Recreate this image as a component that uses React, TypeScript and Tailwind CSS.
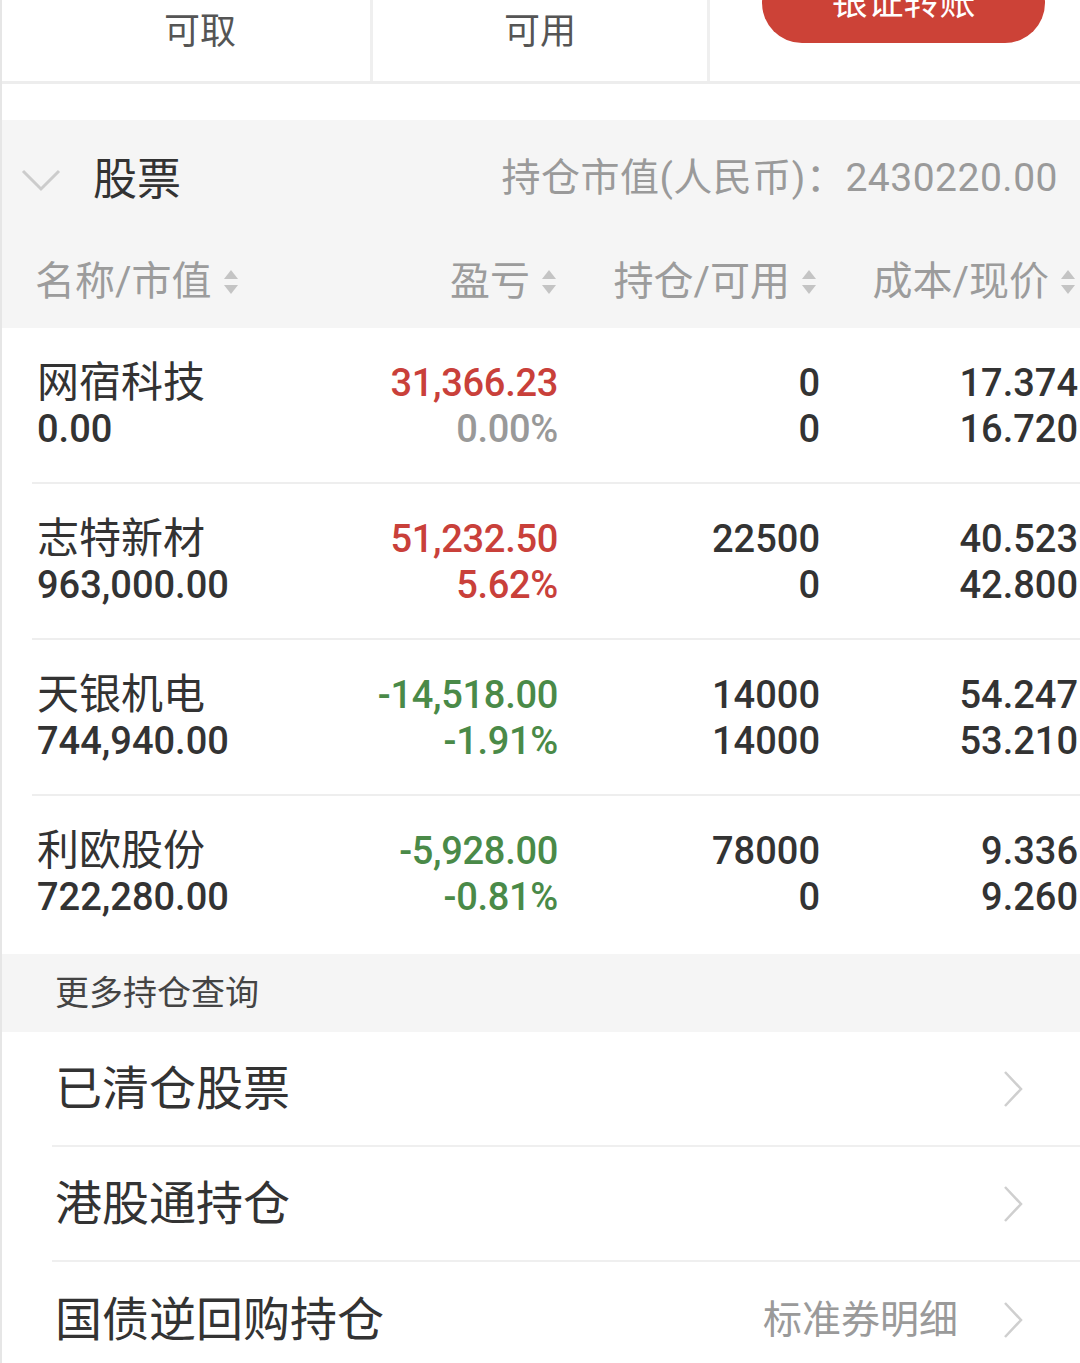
import React from "react";

const rows = [
  { name: "网宿科技", value: "0.00", pnl: "31,366.23", pct: "0.00%", hold: "0", avail: "0", cost: "17.374", price: "16.720", tone: "flat" },
  { name: "志特新材", value: "963,000.00", pnl: "51,232.50", pct: "5.62%", hold: "22500", avail: "0", cost: "40.523", price: "42.800", tone: "up" },
  { name: "天银机电", value: "744,940.00", pnl: "-14,518.00", pct: "-1.91%", hold: "14000", avail: "14000", cost: "54.247", price: "53.210", tone: "down" },
  { name: "利欧股份", value: "722,280.00", pnl: "-5,928.00", pct: "-0.81%", hold: "78000", avail: "0", cost: "9.336", price: "9.260", tone: "down" },
];

function SortIcon() {
  return (
    <svg width="18" height="30" viewBox="0 0 18 30" className="ml-[10px] shrink-0">
      <path d="M9 3 L16 12 L2 12 Z" fill="#c4c4c4" />
      <path d="M9 27 L16 18 L2 18 Z" fill="#c4c4c4" />
    </svg>
  );
}

function Chevron() {
  return (
    <svg width="22" height="38" viewBox="0 0 22 38" className="shrink-0">
      <path d="M3 2 L19 19 L3 36" fill="none" stroke="#cfcfcf" strokeWidth="2.5" />
    </svg>
  );
}

function HeaderCell({ label, className }: { label: string; className: string }) {
  return (
    <div className={className}>
      <span>{label}</span>
      <SortIcon />
    </div>
  );
}

export default function App() {
  return (
    <div className="w-[1080px] h-[1363px] overflow-hidden bg-white border-l-2 border-[#e6e6e6] font-[Roboto,'Noto_Sans_CJK_SC',sans-serif] text-[#333]">
      {/* top tabs */}
      <div className="flex h-[84px] border-b-[3px] border-[#ededed]">
        <div className="w-[371px] flex justify-center pl-[28px] pt-[10px] text-[36px] leading-[44px] text-[#555] border-r-[3px] border-[#efefef]">
          可取
        </div>
        <div className="w-[337px] flex justify-center pt-[10px] text-[36px] leading-[44px] text-[#555] border-r-[3px] border-[#efefef]">
          可用
        </div>
        <div className="flex-1 pl-[52px]">
          <div className="w-[283px] h-[80px] -mt-[37px] rounded-full bg-[#cc4237] flex items-center justify-center text-white text-[36px] leading-[44px]">
            银证转账
          </div>
        </div>
      </div>

      <div className="h-[36px]" />

      {/* stock section header */}
      <div className="bg-[#f5f5f5]">
        <div className="flex items-center h-[120px] pl-[18px] pr-[22px]">
          <svg width="42" height="26" viewBox="0 0 42 26" className="shrink-0">
            <path d="M3 4 L21 22 L39 4" fill="none" stroke="#cccccc" strokeWidth="3" />
          </svg>
          <span className="ml-[31px] text-[44px] leading-[52px] text-[#333]">股票</span>
          <span className="ml-auto text-[39px] leading-[48px] text-[#9a9a9a] -mt-[4px] tracking-[0.5px]">持仓市值(人民币)：2430220.00</span>
        </div>
        <div className="flex items-center h-[88px] text-[40px] leading-[48px] text-[#9c9c9c] pb-[4px]">
          <HeaderCell label="名称/市值" className="w-[240px] pl-[33px] flex items-center" />
          <HeaderCell label="盈亏" className="w-[316px] flex items-center justify-end" />
          <HeaderCell label="持仓/可用" className="w-[260px] flex items-center justify-end" />
          <HeaderCell label="成本/现价" className="w-[259px] flex items-center justify-end" />
        </div>
      </div>

      {/* holdings */}
      <div>
        {rows.map((r, i) => {
          const pnlColor = r.tone === "down" ? "text-[#4a8a48]" : "text-[#c9403a]";
          const pctColor = r.tone === "flat" ? "text-[#999]" : pnlColor;
          return (
            <div key={r.name}>
              <div className="flex h-[154px] pt-[32px] text-[38px] leading-[46px] font-medium">
                <div className="w-[325px] pl-[35px]">
                  <div className="text-[42px] font-normal text-[#333]">{r.name}</div>
                  <div className="text-[#333]">{r.value}</div>
                </div>
                <div className="w-[231px] text-right tracking-[-0.3px]">
                  <div className={pnlColor}>{r.pnl}</div>
                  <div className={pctColor}>{r.pct}</div>
                </div>
                <div className="w-[262px] text-right text-[#333]">
                  <div>{r.hold}</div>
                  <div>{r.avail}</div>
                </div>
                <div className="w-[258px] text-right text-[#333]">
                  <div>{r.cost}</div>
                  <div>{r.price}</div>
                </div>
              </div>
              {i < rows.length - 1 ? (
                <div className="ml-[30px] border-b-2 border-[#eeeeee]" />
              ) : (
                <div className="h-[4px]" />
              )}
            </div>
          );
        })}
      </div>

      {/* more queries */}
      <div className="bg-[#f5f5f5] h-[78px] flex items-center pl-[53px] text-[34px] leading-[40px] text-[#444]">
        更多持仓查询
      </div>

      <div>
        <div className="ml-[50px] h-[115px] flex items-center pl-[3px] pr-[56px] border-b-2 border-[#efefef]">
          <span className="text-[47px] leading-[56px] text-[#333]">已清仓股票</span>
          <span className="ml-auto"><Chevron /></span>
        </div>
        <div className="ml-[50px] h-[115px] flex items-center pl-[3px] pr-[56px] border-b-2 border-[#efefef]">
          <span className="text-[47px] leading-[56px] text-[#333]">港股通持仓</span>
          <span className="ml-auto"><Chevron /></span>
        </div>
        <div className="ml-[50px] h-[115px] flex items-center pl-[3px] pr-[56px]">
          <span className="text-[47px] leading-[56px] text-[#333]">国债逆回购持仓</span>
          <span className="ml-auto text-[39px] leading-[48px] text-[#9a9a9a] mr-[44px]">标准券明细</span>
          <Chevron />
        </div>
      </div>
    </div>
  );
}
